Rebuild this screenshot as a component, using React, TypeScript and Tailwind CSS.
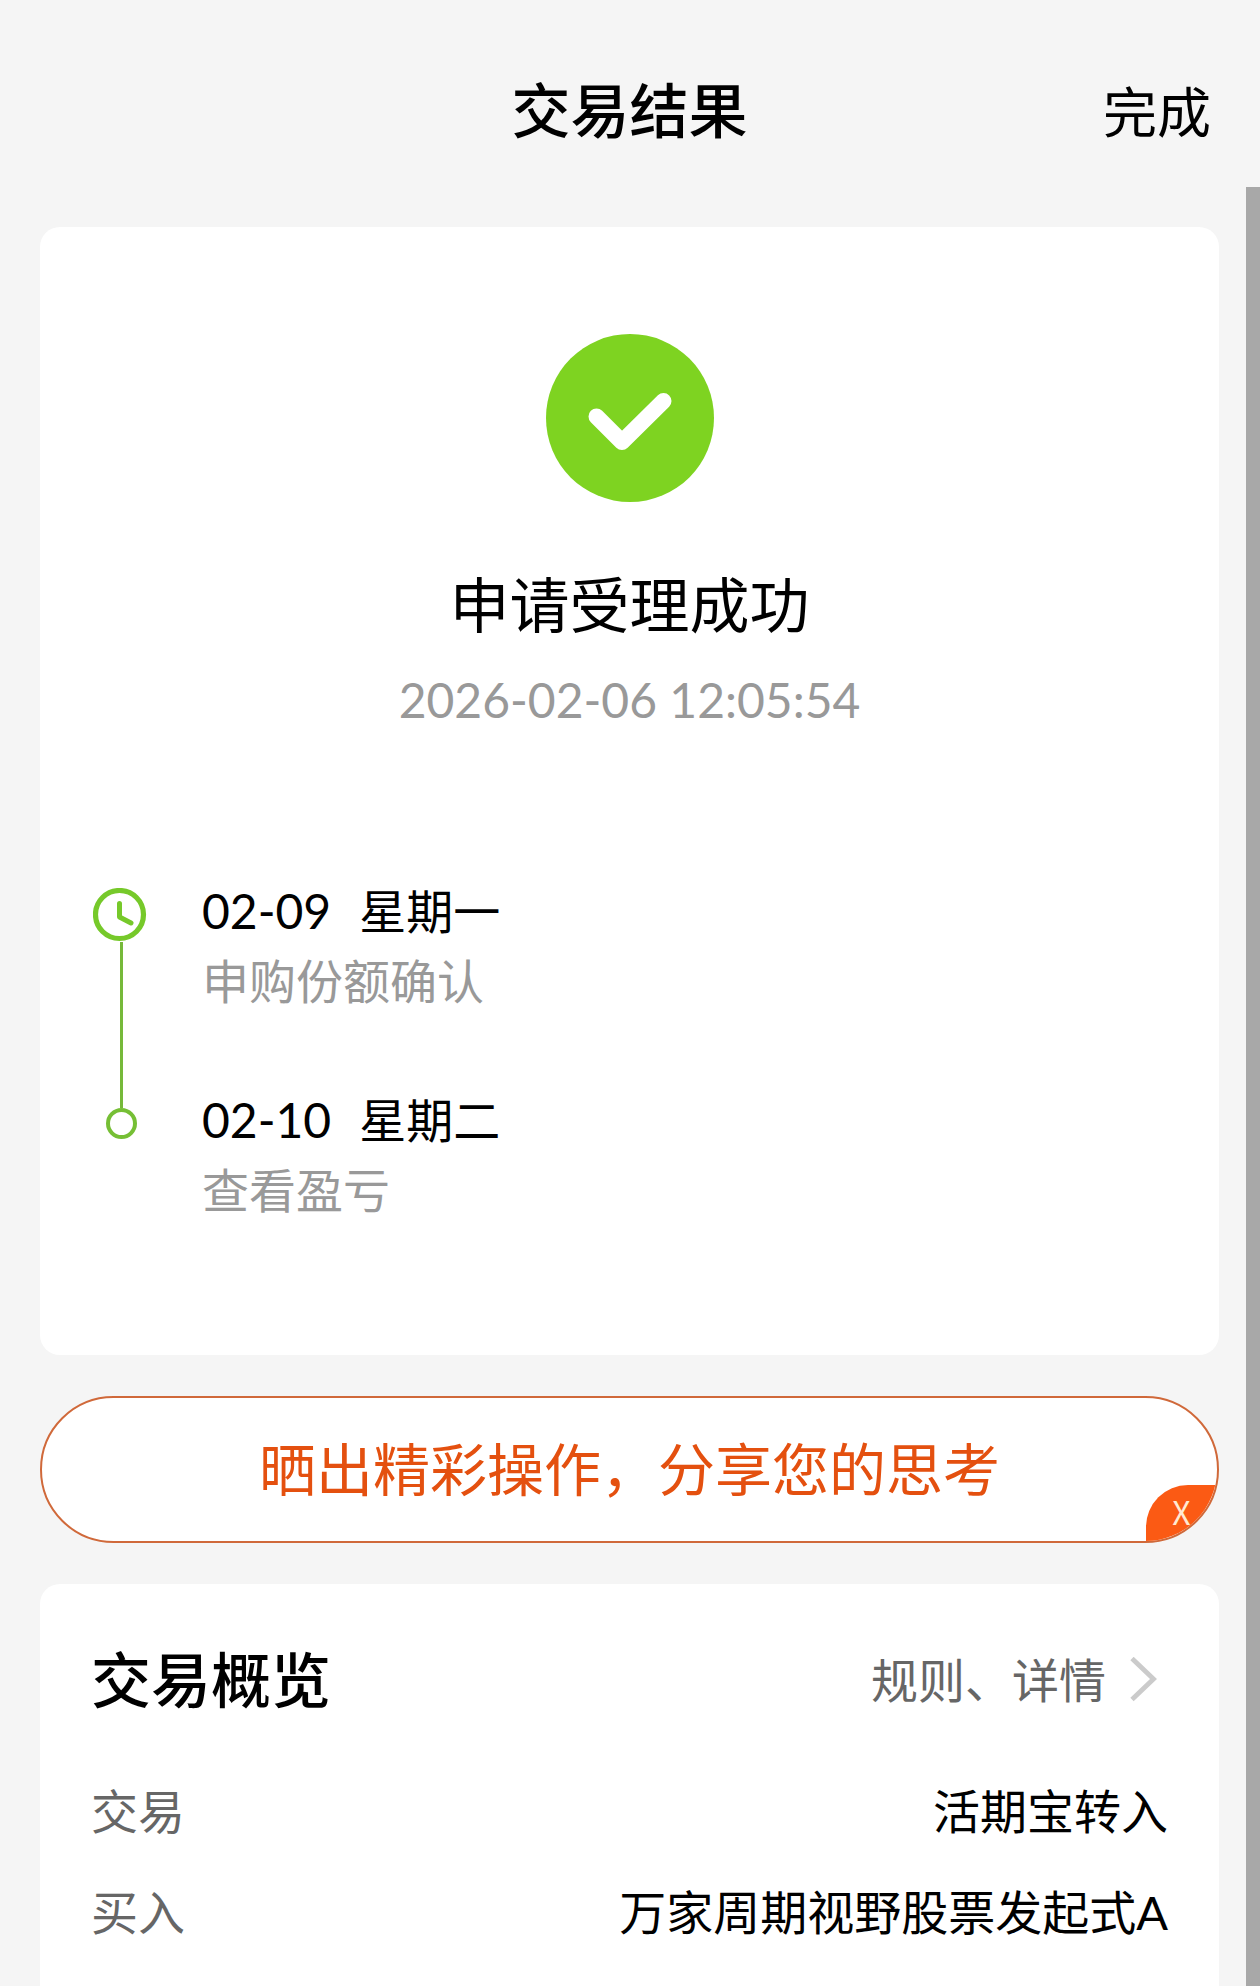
import * as React from "react";

type Step = { date: string; weekday: string; note: string };

const steps: Step[] = [
  { date: "02-09", weekday: "星期一", note: "申购份额确认" },
  { date: "02-10", weekday: "星期二", note: "查看盈亏" },
];

const overview = [
  { label: "交易", value: "活期宝转入" },
  { label: "买入", value: "万家周期视野股票发起式A" },
];

function SuccessIcon() {
  return (
    <svg viewBox="0 0 168 168" className="h-42 w-42" aria-hidden="true">
      <circle cx="84" cy="84" r="84" fill="#7ed321" />
      <path d="M50.5 82.5 76 108l41.5-41" fill="none" stroke="#fff" strokeWidth="16" strokeLinecap="round" strokeLinejoin="round" />
    </svg>
  );
}

function ClockIcon() {
  return (
    <svg viewBox="0 0 54 54" className="h-[54px] w-[54px] shrink-0 self-start" fill="none" stroke="#76c92a" aria-hidden="true">
      <circle cx="26.5" cy="26.5" r="24" strokeWidth="5.2" />
      <path d="M26.5 15.5v13.5l11.5 6" strokeWidth="5" strokeLinecap="round" strokeLinejoin="round" />
    </svg>
  );
}

function ChevronIcon() {
  return (
    <svg viewBox="0 0 28 46" className="h-[46px] w-7" fill="none" stroke="#cbcbcb" strokeWidth="4.8" aria-hidden="true">
      <path d="M2 1.5 23.5 22 2 42.5" />
    </svg>
  );
}

function Timeline() {
  return (
    <ol className="mt-[146px] px-[53px]">
      {steps.map((s, i) => (
        <li key={s.date} className="flex gap-[52px]">
          <div className="flex w-[57px] flex-col items-center">
            {i === 0 ? (
              <>
                <div className="h-3" />
                <ClockIcon />
                <div className="w-[3px] flex-1 bg-[#76b93a]" />
              </>
            ) : (
              <>
                <div className="h-[23px] w-[3px] bg-[#76b93a]" />
                <div className="h-[31px] w-[31px] rounded-full border-4 border-[#76bf35]" />
              </>
            )}
          </div>
          <div className={i < steps.length - 1 ? "pb-[69px]" : ""}>
            <p className="text-[47px] leading-[70px] text-black">
              <time className="text-[48px]">{s.date}</time>
              <span className="ml-7">{s.weekday}</span>
            </p>
            <p className="text-[47px] leading-[70px] text-[#999]">{s.note}</p>
          </div>
        </li>
      ))}
    </ol>
  );
}

function ShareBanner() {
  const [open, setOpen] = React.useState(true);
  if (!open) return null;

  return (
    <div className="relative mt-[41px] overflow-hidden rounded-full border-2 border-[#d0693a] bg-white">
      <button type="button" className="block w-full py-[41px] text-center text-[57px] leading-[61px] text-[#e4500f]">
        晒出精彩操作，分享您的思考
      </button>
      <button
        type="button"
        onClick={() => setOpen(false)}
        className="absolute right-0 bottom-0 h-14 w-[71px] rounded-tl-[42px] bg-[#fb5a14] pb-1 text-center font-['Noto_Sans_CJK_SC',sans-serif] text-[32px] leading-none text-[#ffe9d2]"
      >
        X
      </button>
    </div>
  );
}

export default function App() {
  return (
    <div
      lang="zh-CN"
      className="relative flex min-h-screen flex-col bg-[#f5f5f5] pr-[41px] pl-10 font-['Lato','Noto_Sans_CJK_SC',sans-serif] text-black"
    >
      <header className="grid grid-cols-[1fr_auto_1fr] items-center pt-[81px] pb-[86px]">
        <h1 className="col-start-2 text-[59px] leading-[60px] font-medium">交易结果</h1>
        <button type="button" className="justify-self-end pt-1 pr-2 text-[54px] leading-[56px]">完成</button>
      </header>

      <main className="flex flex-1 flex-col">
        <section className="rounded-[20px] bg-white pt-[107px] pb-[130px]">
          <div className="flex flex-col items-center">
            <SuccessIcon />
            <h2 className="mt-[73px] text-[60px] leading-[60px]">申请受理成功</h2>
            <time className="mt-[35px] text-[48px] leading-[60px] text-[#999]">2026-02-06 12:05:54</time>
          </div>
          <Timeline />
        </section>

        <ShareBanner />

        <section className="mt-[41px] flex-1 rounded-t-[20px] bg-white px-[51px] pt-[66px]">
          <div className="flex items-center justify-between">
            <h2 className="text-[60px] leading-[60px] font-medium">交易概览</h2>
            <a href="#detail" className="flex items-center gap-6 pr-[10px] text-[47px] leading-[60px] text-[#666]">
              规则、详情
              <ChevronIcon />
            </a>
          </div>
          <dl className="mt-[51px]">
            {overview.map((row) => (
              <div key={row.label} className="flex justify-between text-[47px] leading-[101px]">
                <dt className="text-[#666]">{row.label}</dt>
                <dd>{row.value}</dd>
              </div>
            ))}
          </dl>
        </section>
      </main>

      {/* page scroll thumb */}
      <div className="absolute top-[187px] right-0 bottom-0 w-[14px] bg-[#a8a8a8]" />
    </div>
  );
}
